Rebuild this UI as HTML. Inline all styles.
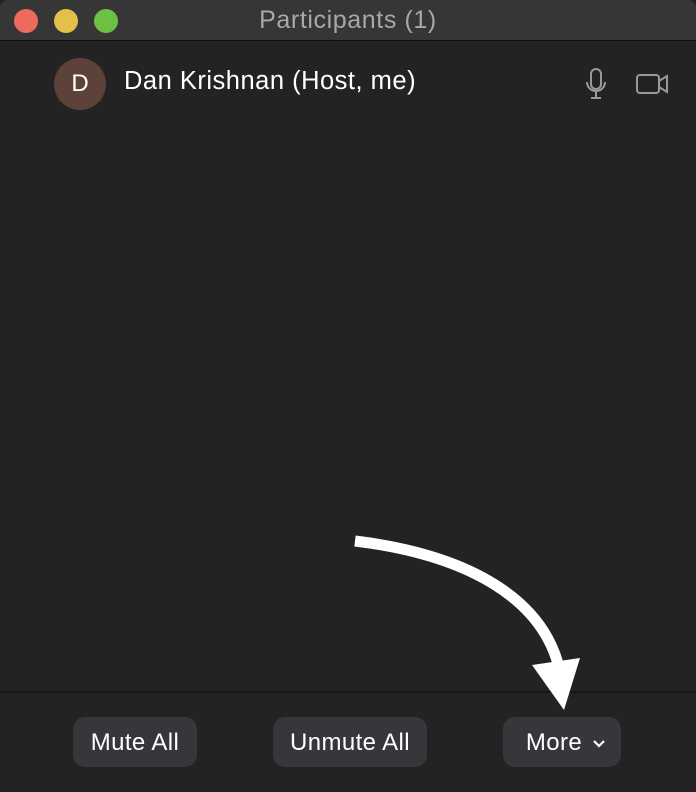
<!DOCTYPE html>
<html><head><style>
body{margin:0;width:696px;height:792px;background:#232323;font-family:"Liberation Sans",sans-serif;overflow:hidden;position:relative}
.title{position:absolute;left:0;top:0;width:696px;height:40px;background:#363636;border-bottom:1px solid #111;border-radius:8px 8px 0 0}
.dot{position:absolute;top:9px;width:24px;height:24px;border-radius:50%}
.tt{position:absolute;top:0;width:696px;text-align:center;line-height:40px;color:#a8a8a8;font-size:25px;letter-spacing:0.6px}
.av{position:absolute;left:54px;top:58px;width:52px;height:52px;border-radius:50%;background:#5c4238;color:#fff;font-size:24px;text-align:center;line-height:52px}
.nm{position:absolute;left:124px;top:67px;color:#fff;font-size:25.5px;letter-spacing:0.5px}
.div{position:absolute;left:0;top:691px;width:696px;height:2px;background:#161616}
.btn{position:absolute;top:717px;height:50px;background:#36373b;border-radius:12px;color:#fff;font-size:24px;letter-spacing:0.4px;line-height:52px;text-align:center}
</style></head><body>
<div class="title">
<div class="dot" style="left:14px;background:#ee6a5f"></div>
<div class="dot" style="left:54px;background:#e2c04a"></div>
<div class="dot" style="left:94px;background:#6cc144"></div>
<div class="tt">Participants (1)</div>
</div>
<div class="av">D</div>
<div class="nm">Dan Krishnan (Host, me)</div>
<svg style="position:absolute;left:580px;top:66px" width="95" height="36" fill="none" stroke="#9a9a9a" stroke-width="2">
<rect x="11" y="3" width="10" height="20" rx="5"/>
<path d="M7 16a9 9 0 0 0 18 0M16 25v7M11 32h10"/>
<rect x="57" y="9" width="22" height="18" rx="3"/>
<path d="M79 15l8-5v16l-8-5"/>
</svg>
<div class="div"></div>
<svg style="position:absolute;left:0;top:0" width="696" height="792">
<path d="M355 541 C470 555 545 600 560 672" stroke="#fff" stroke-width="11" fill="none"/>
<polygon points="532,665 580,658 564,710" fill="#fff"/>
</svg>
<div class="btn" style="left:73px;width:124px">Mute All</div>
<div class="btn" style="left:273px;width:154px">Unmute All</div>
<div class="btn" style="left:503px;width:118px"><span style="position:relative;left:-8px">More</span><svg style="position:absolute;left:89px;top:22px" width="14" height="9" fill="none" stroke="#fff" stroke-width="2.2"><path d="M2 2l5 5 5-5"/></svg></div>
</body></html>
